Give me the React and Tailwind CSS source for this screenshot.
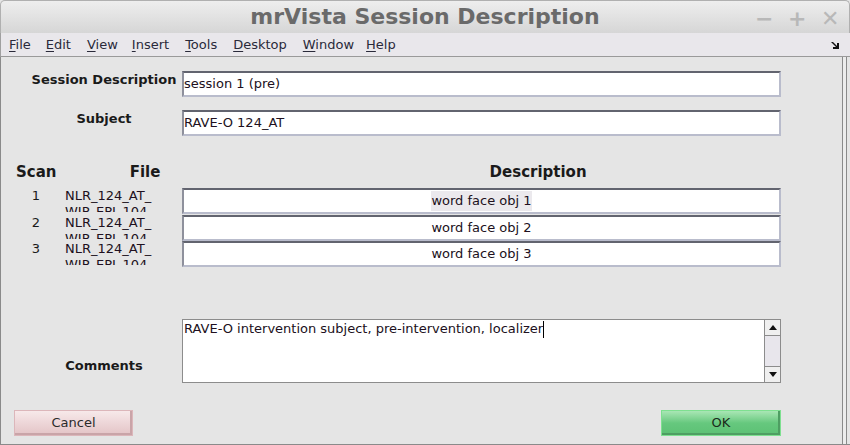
import React from "react";

const font = { fontFamily: '"DejaVu Sans", "Liberation Sans", sans-serif' };

const menus = [
  ["F", "ile", "mr-[15px]"],
  ["E", "dit", "mr-[16px]"],
  ["V", "iew", "mr-[14px]"],
  ["I", "nsert", "mr-[16px]"],
  ["T", "ools", "mr-[16px]"],
  ["D", "esktop", "mr-[16px]"],
  ["W", "indow", "mr-[12px]"],
  ["H", "elp", ""],
];

const scans = [
  { n: "1", desc: "word face obj 1", sel: true },
  { n: "2", desc: "word face obj 2" },
  { n: "3", desc: "word face obj 3" },
];

const TextBox = ({ children, center, className = "" }) => (
  <div
    className={`h-[26px] bg-white border-2 border-t-[#62646f] border-l-[#8e909c] border-b-[#b9bccc] border-r-[#b9bccc] flex items-center text-[13px] text-[#201020] ${center ? "justify-center" : ""} ${className}`}
  >
    {children}
  </div>
);

export default function App() {
  return (
    <div style={font} className="w-[850px] h-[445px] overflow-hidden bg-[#e5e5e5] flex flex-col">
      {/* title bar */}
      <div className="h-[33px] shrink-0 rounded-tl-[5px] rounded-tr-[5px] border-t border-l border-r border-[#b0b0b0] bg-gradient-to-b from-[#eeeeee] to-[#d6d6d6] flex items-center relative">
        <div className="flex-1 text-center text-[22px] font-bold text-[#6a6a6a] leading-none pb-[1px]">
          mrVista Session Description
        </div>
        <div className="absolute right-[12px] top-[1px] flex items-center gap-[17px] text-[#b8b8b8] text-[22px] font-bold">
          <span className="w-[16px] text-center">−</span>
          <span className="w-[16px] text-center">+</span>
          <span className="w-[16px] text-center">✕</span>
        </div>
      </div>

      {/* menu bar */}
      <div className="h-[24px] shrink-0 bg-[#e9e7eb] border-l border-[#a0a0a0] border-b border-b-[#9a9a9a] flex items-center text-[13px] text-[#2a2a3a] pl-[8px] pr-[8px]">
        <div className="flex">
          {menus.map(([u, rest, m], i) => (
            <span key={i} className={m}>
              <span className="underline underline-offset-2">{u}</span>
              {rest}
            </span>
          ))}
        </div>
        <div className="flex-1" />
        <svg width="10" height="10" viewBox="0 0 10 10" className="mr-[2px]">
          <path d="M1 2 L3 2 L7 6 L7 3 L9 3 L9 9 L3 9 L3 7 L6 7 L2 3 Z" fill="#111" />
        </svg>
      </div>

      {/* body */}
      <div className="flex-1 flex border-l border-[#8a8a8a] border-b border-b-[#8a8a8a]">
        <div className="w-[841px] flex flex-col pt-[14px]">
          {/* session description */}
          <div className="flex items-start">
            <div className="ml-[30px] w-[146px] text-center text-[13px] font-bold text-[#1a1a1a] leading-[16px] mt-[1px]">
              Session Description
            </div>
            <TextBox className="ml-[5px] w-[599px]">session 1 (pre)</TextBox>
          </div>

          {/* subject */}
          <div className="flex items-start mt-[13px]">
            <div className="ml-[30px] w-[146px] text-center text-[13px] font-bold text-[#1a1a1a] leading-[16px] mt-[1px]">
              Subject
            </div>
            <TextBox className="ml-[5px] w-[599px]">RAVE-O 124_AT</TextBox>
          </div>

          {/* headers */}
          <div className="flex mt-[27px] text-[15px] font-bold text-[#1a1a1a] leading-[18px]">
            <span className="ml-[15px] w-[40px] text-center">Scan</span>
            <span className="w-[180px] text-center">File</span>
            <span className="w-[614px] text-center">Description</span>
          </div>

          {/* scan rows */}
          <div className="flex flex-col mt-[7px] gap-[0.5px]">
            {scans.map((s) => (
              <div key={s.n} className="flex h-[26px]">
                <div className="ml-[15px] w-[40px] text-center text-[13px] text-[#1a1a1a] leading-[16px]">
                  {s.n}
                </div>
                <div className="ml-[9px] w-[112px] h-[24px] overflow-hidden text-[13px] text-[#201020] leading-[16px] whitespace-nowrap">
                  NLR_124_AT_
                  <br />
                  WIP_EPI_104
                </div>
                <TextBox center className="ml-[5px] w-[599px]">
                  <span className={s.sel ? "bg-[#ebe9ed]" : ""}>{s.desc}</span>
                </TextBox>
              </div>
            ))}
          </div>

          {/* comments */}
          <div className="flex mt-[52px]">
            <div className="ml-[30px] w-[146px] text-center text-[13px] font-bold text-[#1a1a1a] self-end mb-[9px] leading-[16px]">
              Comments
            </div>
            <div className="ml-[5px] w-[599px] h-[64px] bg-white border border-[#8c8c8c] flex">
              <div className="flex-1 text-[13px] text-[#201020] leading-[16px] pl-[1px] pt-[1px] flex items-start">
                <span>RAVE-O intervention subject, pre-intervention, localizer</span>
                <span className="inline-block w-px h-[17px] bg-black" />
              </div>
              <div className="w-[16px] border-l border-[#8c8c8c] bg-[#e8e6ec] flex flex-col justify-between">
                <div className="h-[16px] bg-[#efefef] border-b border-[#8c8c8c] flex items-center justify-center">
                  <svg width="8" height="5" viewBox="0 0 8 5"><path d="M0 5 L4 0 L8 5 Z" fill="#111" /></svg>
                </div>
                <div className="h-[16px] bg-[#efefef] border-t border-[#8c8c8c] flex items-center justify-center">
                  <svg width="8" height="5" viewBox="0 0 8 5"><path d="M0 0 L4 5 L8 0 Z" fill="#111" /></svg>
                </div>
              </div>
            </div>
          </div>

          {/* buttons */}
          <div className="flex mt-[27px]">
            <button className="ml-[13px] w-[119px] h-[26px] border border-[#dcb6ba] bg-gradient-to-b from-[#f7e9ea] to-[#e3c3c6] shadow-[inset_-2px_-2px_0_#c9a4a8] text-[13px] text-[#2a2a2a] flex items-center justify-center">
              Cancel
            </button>
            <div className="flex-1" />
            <button className="mr-[61px] w-[120px] h-[26px] border border-[#7ee090] bg-gradient-to-b from-[#a8e6b4] via-[#66c87e] to-[#5cc074] shadow-[inset_-2px_-2px_0_#4e9e62] text-[13px] text-[#1a2a1a] flex items-center justify-center">
              OK
            </button>
          </div>
        </div>
        {/* right frame */}
        <div className="w-[5px] border-l border-r border-[#8a8a8a] bg-[#ececec]" />
        <div className="flex-1" />
      </div>
    </div>
  );
}
